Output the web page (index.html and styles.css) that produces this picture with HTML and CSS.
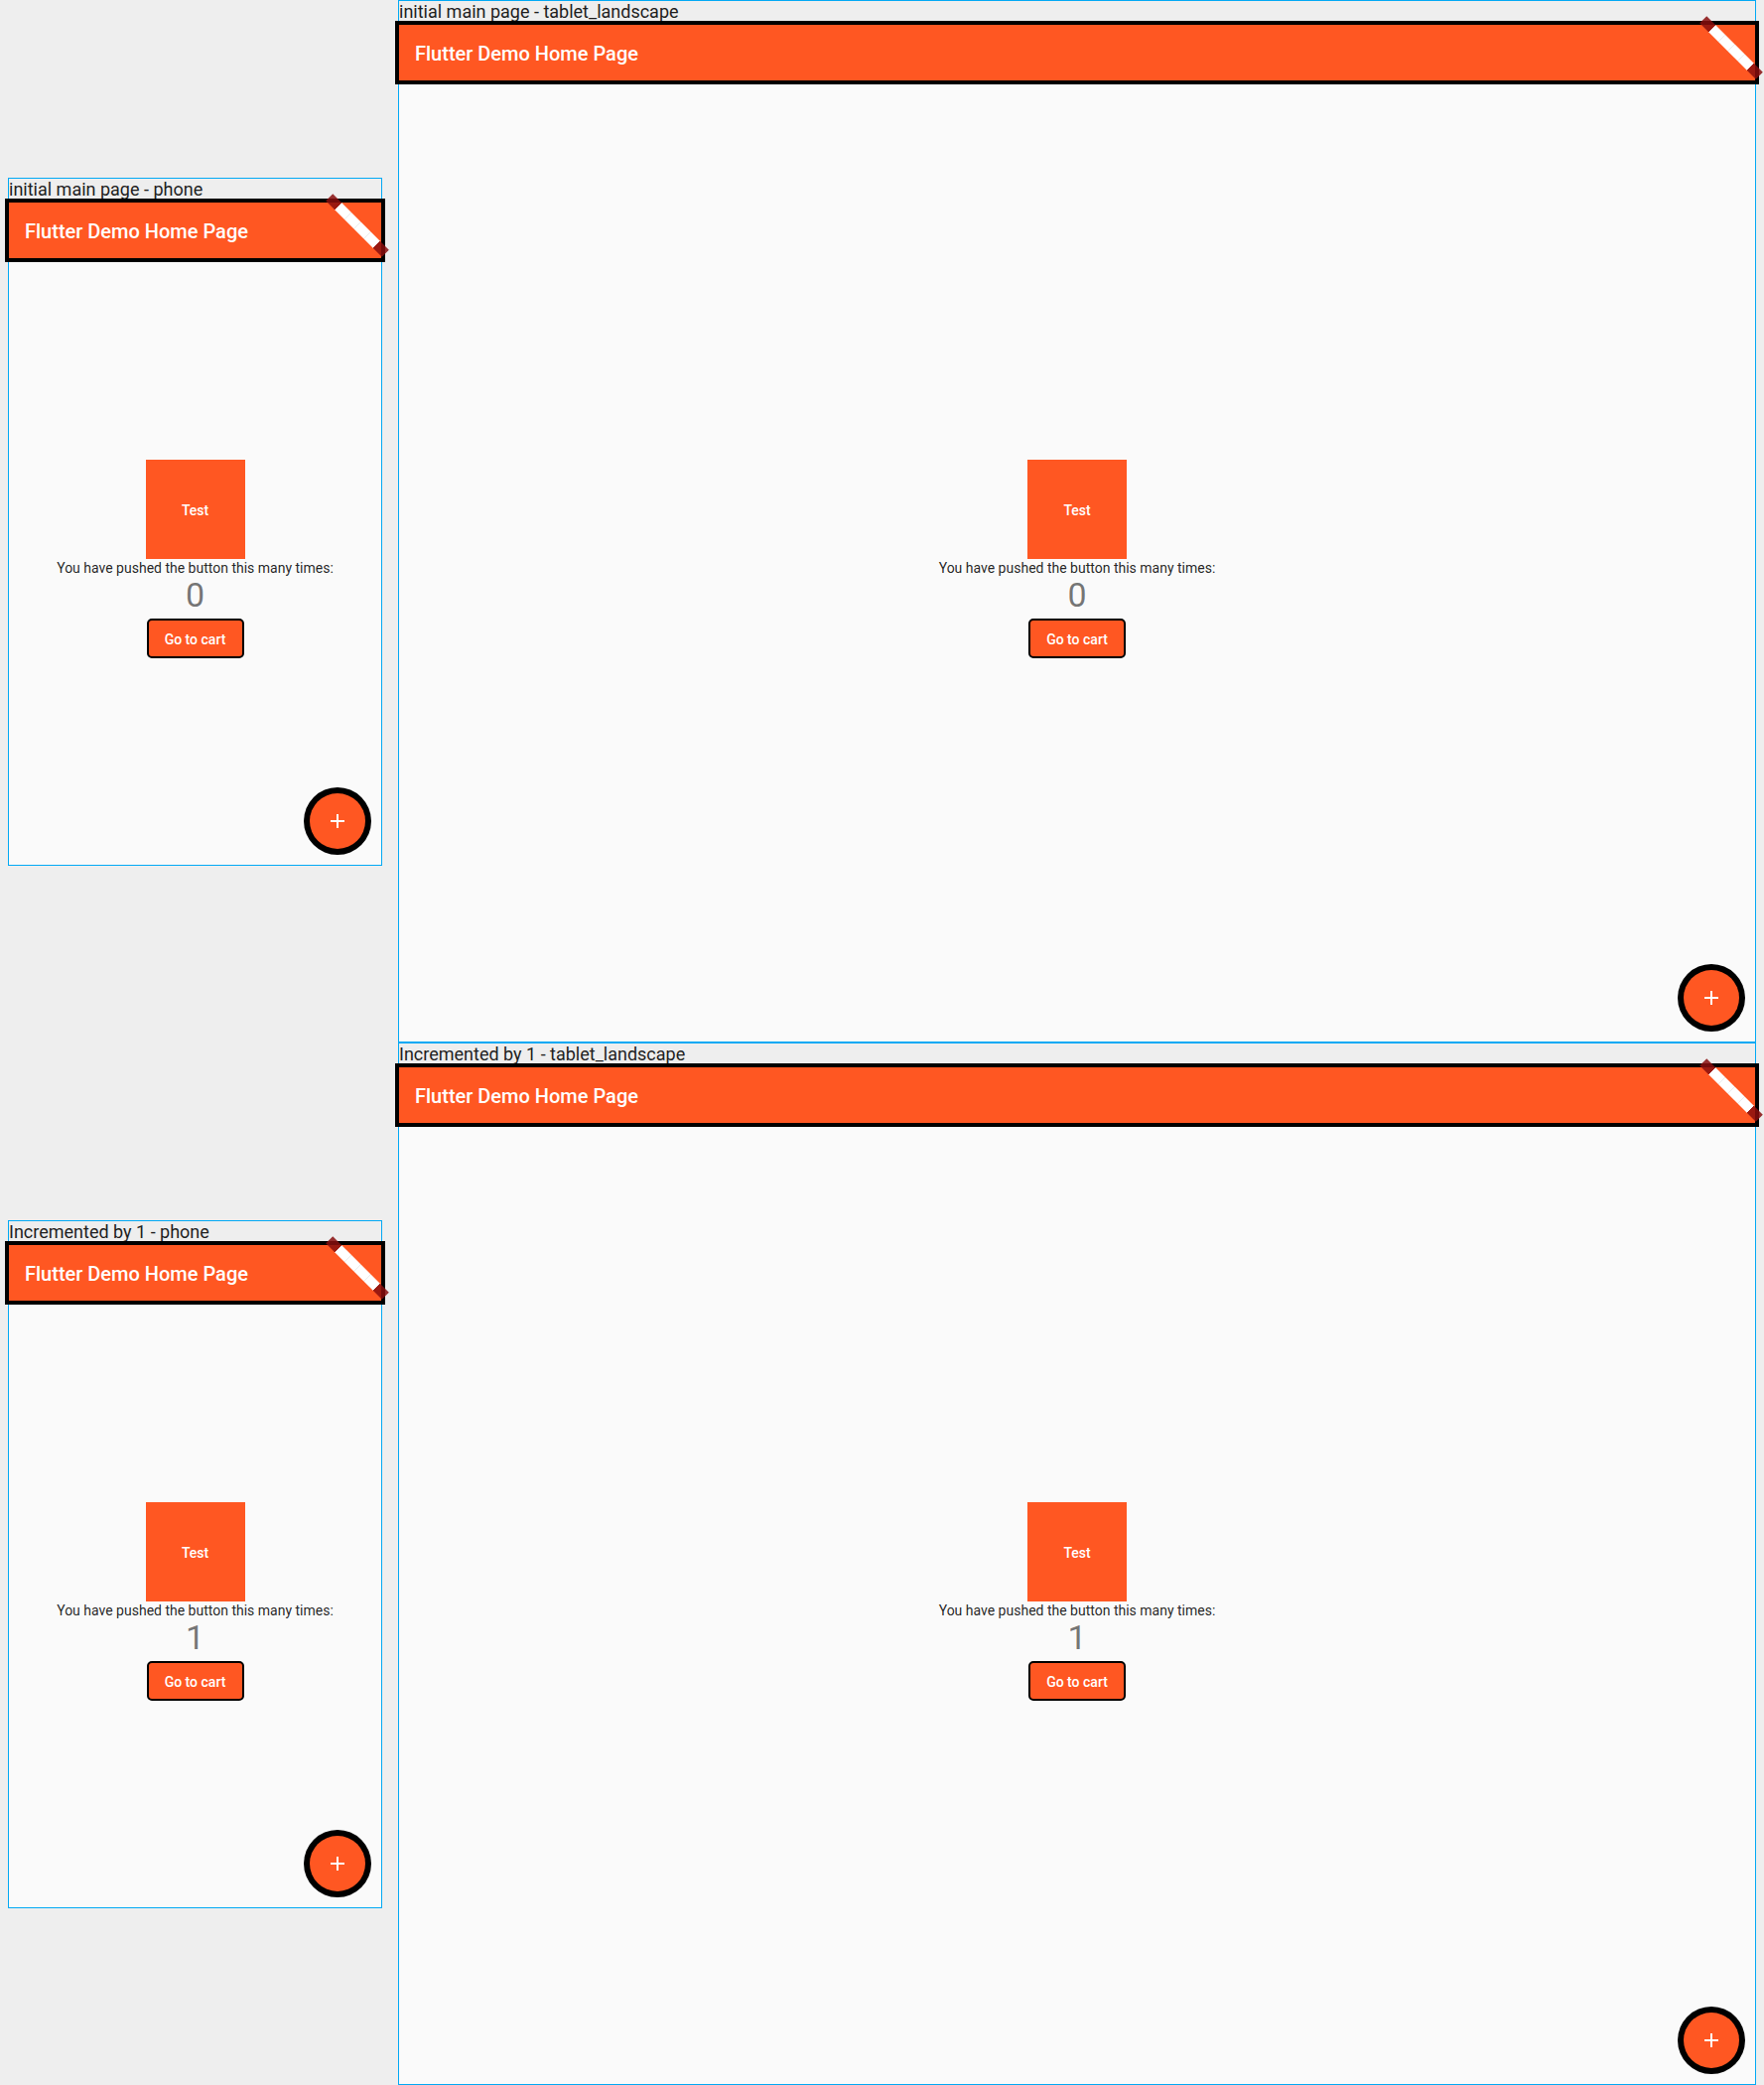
FILE: index.html
```html
<!DOCTYPE html>
<html>
<head>
<meta charset="utf-8">
<link rel="stylesheet" href="styles.css">
</head>
<body>
<div class="grid">
  <div class="cell cell-phone">
    <div class="frame">
      <div class="label">initial main page - phone</div>
      <div class="device device-phone">
        <div class="appbar"><span class="title">Flutter Demo Home Page</span></div>
        <div class="banner"></div>
        <div class="body">
          <div class="test-box">Test</div>
          <div class="caption">You have pushed the button this many times:</div>
          <div class="counter">0</div>
          <div class="cart-btn">Go to cart</div>
        </div>
        <div class="fab"><svg viewBox="0 0 24 24" width="24" height="24"><path d="M19 13h-6v6h-2v-6H5v-2h6V5h2v6h6v2z" fill="#fff"/></svg></div>
      </div>
    </div>
  </div>
  <div class="cell cell-tablet">
    <div class="frame">
      <div class="label">initial main page - tablet_landscape</div>
      <div class="device device-tablet">
        <div class="appbar"><span class="title">Flutter Demo Home Page</span></div>
        <div class="banner"></div>
        <div class="body">
          <div class="test-box">Test</div>
          <div class="caption">You have pushed the button this many times:</div>
          <div class="counter">0</div>
          <div class="cart-btn">Go to cart</div>
        </div>
        <div class="fab"><svg viewBox="0 0 24 24" width="24" height="24"><path d="M19 13h-6v6h-2v-6H5v-2h6V5h2v6h6v2z" fill="#fff"/></svg></div>
      </div>
    </div>
  </div>
  <div class="cell cell-phone">
    <div class="frame">
      <div class="label">Incremented by 1 - phone</div>
      <div class="device device-phone">
        <div class="appbar"><span class="title">Flutter Demo Home Page</span></div>
        <div class="banner"></div>
        <div class="body">
          <div class="test-box">Test</div>
          <div class="caption">You have pushed the button this many times:</div>
          <div class="counter">1</div>
          <div class="cart-btn">Go to cart</div>
        </div>
        <div class="fab"><svg viewBox="0 0 24 24" width="24" height="24"><path d="M19 13h-6v6h-2v-6H5v-2h6V5h2v6h6v2z" fill="#fff"/></svg></div>
      </div>
    </div>
  </div>
  <div class="cell cell-tablet">
    <div class="frame">
      <div class="label">Incremented by 1 - tablet_landscape</div>
      <div class="device device-tablet">
        <div class="appbar"><span class="title">Flutter Demo Home Page</span></div>
        <div class="banner"></div>
        <div class="body">
          <div class="test-box">Test</div>
          <div class="caption">You have pushed the button this many times:</div>
          <div class="counter">1</div>
          <div class="cart-btn">Go to cart</div>
        </div>
        <div class="fab"><svg viewBox="0 0 24 24" width="24" height="24"><path d="M19 13h-6v6h-2v-6H5v-2h6V5h2v6h6v2z" fill="#fff"/></svg></div>
      </div>
    </div>
  </div>
</div>
</body>
</html>
```
FILE: styles.css
```css
html, body {
  margin: 0;
  padding: 0;
  background: #eeeeee;
  font-family: Roboto, "Liberation Sans", sans-serif;
}

.grid {
  display: grid;
  grid-template-columns: 393px 1384px;
  grid-auto-rows: 1050px;
}

.cell {
  padding: 0 8px;
  display: flex;
  align-items: center;
}

.cell-tablet {
  align-items: flex-start;
}

.frame {
  border: 1px solid #03a9f4;
}

.label {
  height: 24px;
  line-height: 22px;
  font-size: 18px;
  color: #1f1f1f;
  white-space: nowrap;
}

.device {
  position: relative;
  background: #fafafa;
  display: flex;
  flex-direction: column;
}

.device-phone {
  width: 375px;
  height: 667px;
}

.device-tablet {
  width: 1366px;
  height: 1024px;
}

.appbar {
  box-sizing: border-box;
  height: 56px;
  flex: none;
  background: #ff5722;
  outline: 4px solid #000;
  display: flex;
  align-items: center;
  padding-left: 16px;
  padding-top: 2px;
  position: relative;
  z-index: 1;
}

.title {
  color: #fff;
  font-size: 20px;
  font-weight: 500;
}

.banner {
  position: absolute;
  top: 18px;
  right: -16px;
  width: 80px;
  height: 10px;
  transform: rotate(45deg);
  z-index: 2;
  background:
    linear-gradient(to right,
      rgba(136, 14, 14, 0.85) 0, rgba(136, 14, 14, 0.85) 13px,
      #ffffff 13px, #ffffff 26px,
      #ececec 26px, #ececec 26.6px,
      #ffffff 26.6px, #ffffff 40px,
      #ececec 40px, #ececec 40.6px,
      #ffffff 40.6px, #ffffff 54px,
      #ececec 54px, #ececec 54.6px,
      #ffffff 54.6px, #ffffff 67px,
      rgba(136, 14, 14, 0.85) 67px, rgba(136, 14, 14, 0.85) 80px);
}

.body {
  flex: 1;
  display: flex;
  flex-direction: column;
  align-items: center;
  justify-content: center;
}

.test-box {
  box-sizing: border-box;
  width: 100px;
  height: 100px;
  padding-top: 2px;
  background: #ff5722;
  color: #fff;
  font-size: 14px;
  font-weight: 500;
  display: flex;
  align-items: center;
  justify-content: center;
}

.caption {
  padding-top: 1px;
  font-size: 14px;
  line-height: 16.4px;
  color: rgba(0, 0, 0, 0.87);
}

.counter {
  font-size: 34px;
  line-height: 39px;
  color: rgba(0, 0, 0, 0.54);
}

.cart-btn {
  box-sizing: border-box;
  width: 98px;
  height: 40px;
  margin: 4px 0;
  padding-top: 2px;
  background: #ff5722;
  border: 2px solid #000;
  border-radius: 5px;
  color: #fff;
  font-size: 14px;
  font-weight: 500;
  display: flex;
  align-items: center;
  justify-content: center;
}

.fab {
  position: absolute;
  right: 16px;
  bottom: 16px;
  width: 56px;
  height: 56px;
  border-radius: 50%;
  background: #ff5722;
  box-shadow: 0 0 0 6px #000;
  display: flex;
  align-items: center;
  justify-content: center;
}

.fab svg {
  display: block;
}
```
